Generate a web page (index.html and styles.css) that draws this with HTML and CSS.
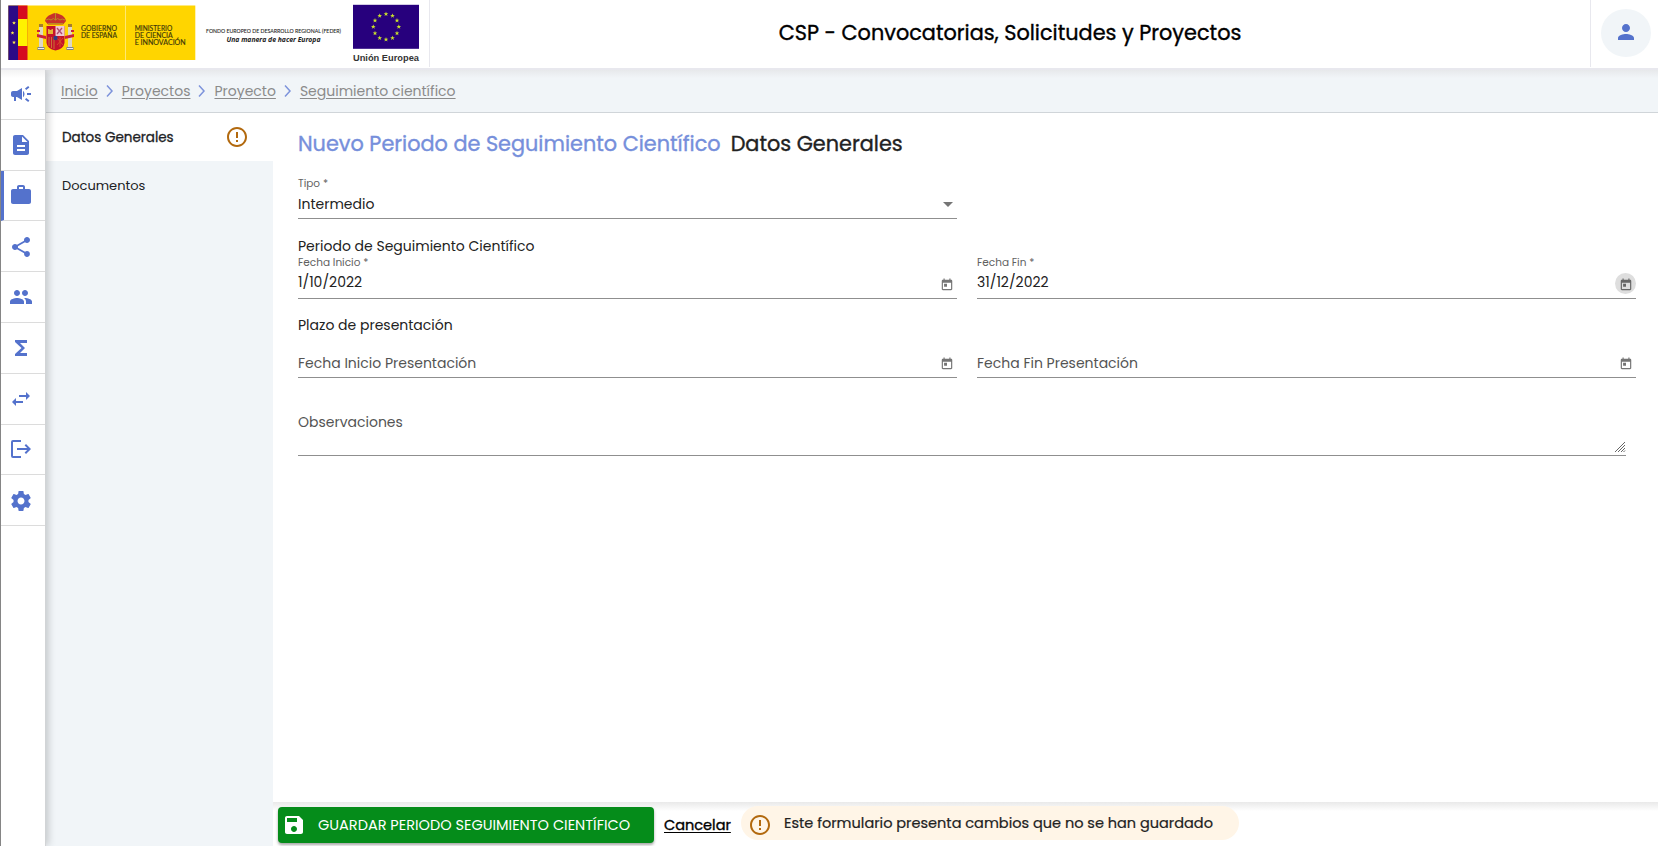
FILE: index.html
```html
<!DOCTYPE html>
<html lang="es">
<head>
<meta charset="utf-8">
<title>CSP - Convocatorias, Solicitudes y Proyectos</title>
<link rel="stylesheet" href="styles.css">
</head>
<body>
<svg width="0" height="0" class="defs">
  <symbol id="star" viewBox="-5 -5 10 10"><path d="M0-5 1.2-1.6 4.8-1.6 1.9.6 3 4 0 1.9-3 4-1.9.6-4.8-1.6-1.2-1.6z"/></symbol>
  <symbol id="error" viewBox="0 0 24 24"><path d="M11 15h2v2h-2zm0-8h2v6h-2zm.99-5C6.47 2 2 6.48 2 12s4.47 10 9.99 10C17.52 22 22 17.52 22 12S17.52 2 11.99 2zM12 20c-4.42 0-8-3.58-8-8s3.58-8 8-8 8 3.58 8 8-3.58 8-8 8z"/></symbol>
  <symbol id="today" viewBox="0 0 24 24"><path d="M19 3h-1V1h-2v2H8V1H6v2H5c-1.11 0-1.99.9-1.99 2L3 19c0 1.1.89 2 2 2h14c1.1 0 2-.9 2-2V5c0-1.1-.9-2-2-2zm0 16H5V8h14v11zM7 10h5v5H7z"/></symbol>
</svg>
<div class="app">
  <header class="header">
    <div class="logos">
      <svg width="429" height="68" viewBox="0 0 429 68">
        <rect x="8.300" y="5.500" width="187" height="54.500" fill="#ffd500"/>
        <rect x="8.300" y="5.500" width="10" height="54.500" fill="#2d0a87"/>
        <rect x="18" y="5.500" width="9.500" height="54.500" fill="#d60b1f"/>
        <rect x="18" y="19" width="9.500" height="27" fill="#fff200"/>
        <g fill="#fff04a"><use href="#star" x="12" y="21" width="4" height="4"/><use href="#star" x="10.500" y="31" width="4" height="4"/><use href="#star" x="12" y="40.500" width="4" height="4"/></g>
        <g>
          <path d="M45 21q1-5 6-6.500 4-3 9 0 5 1.500 6 6.500l-3 3.500H48z" fill="#c8312b"/>
          <path d="M46 20q3-2 5 0 2.500-3 4.500 0 2-3 4.500 0 2-2 5 0M48 23.500h15M55.500 13v7" fill="none" stroke="#b98a24" stroke-width="1"/>
          <path d="M46.500 26h18v17q-1 6-9 7.500-8-1.500-9-7.500z" fill="#c4122a"/>
          <path d="M55.500 26h9v10h-9z" fill="#eec7d3"/>
          <path d="M57 28l5 6m0-6-5 6" stroke="#b0486e" stroke-width="1.300"/>
          <path d="M48 34v-5h1.500v1h2v-1H53v5z" fill="#e5b332"/>
          <path d="M49 37v9M51.500 37v11M54 37v12" stroke="#c98a38" stroke-width=".8"/>
          <path d="M57 38l6 7m0-7-6 7M60 37v10" stroke="#d75a25" stroke-width=".8"/>
          <circle cx="55.500" cy="38" r="2.200" fill="#2e3a84"/>
          <path d="M39 27h4v20h-4zM68 27h4v20h-4z" fill="#ded6c6"/>
          <path d="M39 24h4v3h-4zM68 24h4v3h-4z" fill="#a77c2c"/>
          <path d="M37 34l9 2v3l-9-2zM74 34l-9 2v3l9-2zM37 30h3v2h-3zM71 30h3v2h-3z" fill="#cc2038"/>
          <path d="M37.500 47h7v3h-7zM66.500 47h7v3h-7z" fill="#7b8391"/>
          <path d="M38 48.500h6M67 48.500h6" stroke="#eee" stroke-width="1"/>
        </g>
        <path d="M125.500 5.500V60" stroke="#ffe873"/>
        <g class="gov">
          <text x="81" y="30.500" textLength="36" lengthAdjust="spacingAndGlyphs">GOBIERNO</text>
          <text x="81" y="37.700" textLength="36" lengthAdjust="spacingAndGlyphs">DE ESPAÑA</text>
          <text x="134.700" y="30.500" textLength="37.500" lengthAdjust="spacingAndGlyphs">MINISTERIO</text>
          <text x="134.700" y="37.700" textLength="38" lengthAdjust="spacingAndGlyphs">DE CIENCIA</text>
          <text x="134.700" y="45" textLength="51" lengthAdjust="spacingAndGlyphs">E INNOVACIÓN</text>
        </g>
        <text class="feder" x="206" y="33" textLength="135" lengthAdjust="spacingAndGlyphs">FONDO EUROPEO DE DESARROLLO REGIONAL (FEDER)</text>
        <text class="manera" x="226.500" y="41.500" textLength="94" lengthAdjust="spacingAndGlyphs">Una manera de hacer Europa</text>
        <rect x="353" y="4.800" width="66" height="44" fill="#27007d"/>
        <g fill="#c9e02c">
          <use href="#star" x="383.500" y="11.500" width="5" height="5"/><use href="#star" x="390" y="13.200" width="5" height="5"/><use href="#star" x="394.500" y="18" width="5" height="5"/><use href="#star" x="396.300" y="24.300" width="5" height="5"/><use href="#star" x="394.500" y="30.800" width="5" height="5"/><use href="#star" x="390" y="35.500" width="5" height="5"/><use href="#star" x="383.500" y="37" width="5" height="5"/><use href="#star" x="377.200" y="35.500" width="5" height="5"/><use href="#star" x="372.500" y="30.800" width="5" height="5"/><use href="#star" x="370.800" y="24.300" width="5" height="5"/><use href="#star" x="372.500" y="18" width="5" height="5"/><use href="#star" x="377.200" y="13.200" width="5" height="5"/>
        </g>
        <text class="ue" x="353" y="61.300" textLength="66" lengthAdjust="spacingAndGlyphs">Unión Europea</text>
      </svg>
    </div>
    <h1 class="app-title">CSP - Convocatorias, Solicitudes y Proyectos</h1>
    <div class="user"><span class="avatar"><svg width="24" height="24" viewBox="0 0 24 24"><path d="M12 12c2.210 0 4-1.790 4-4s-1.790-4-4-4-4 1.790-4 4 1.790 4 4 4zm0 2c-2.670 0-8 1.340-8 4v2h16v-2c0-2.660-5.330-4-8-4z"/></svg></span></div>
  </header>
  <div class="shell">
    <nav class="rail">
      <a class="rail-item"><svg viewBox="0 0 24 24"><path d="M18 11v2h4v-2h-4zm-2 6.610c.96.710 2.210 1.650 3.200 2.390.4-.53.8-1.070 1.200-1.600-.99-.74-2.240-1.680-3.200-2.400-.4.540-.8 1.080-1.200 1.610zM20.400 5.600c-.4-.53-.8-1.070-1.200-1.600-.99.740-2.240 1.680-3.200 2.400.4.530.8 1.070 1.200 1.600.96-.72 2.210-1.650 3.200-2.400zM4 9c-1.100 0-2 .9-2 2v2c0 1.100.9 2 2 2h1v4h2v-4h1l5 3V6L8 9H4zm11.500 3c0-1.330-.58-2.530-1.500-3.350v6.690c.92-.81 1.500-2.010 1.500-3.340z"/></svg></a>
      <a class="rail-item"><svg viewBox="0 0 24 24"><path d="M14 2H6c-1.100 0-1.990.9-1.990 2L4 20c0 1.100.89 2 1.990 2H18c1.100 0 2-.9 2-2V8l-6-6zm2 16H8v-2h8v2zm0-4H8v-2h8v2zm-3-5V3.500L18.500 9H13z"/></svg></a>
      <a class="rail-item active"><svg viewBox="0 0 24 24"><path d="M20 6h-4V4c0-1.110-.89-2-2-2h-4c-1.110 0-2 .89-2 2v2H4c-1.110 0-1.990.89-1.990 2L2 19c0 1.110.89 2 2 2h16c1.110 0 2-.89 2-2V8c0-1.110-.89-2-2-2zm-6 0h-4V4h4v2z"/></svg></a>
      <a class="rail-item"><svg viewBox="0 0 24 24"><path d="M18 16.080c-.76 0-1.440.3-1.960.77L8.910 12.700c.05-.23.09-.46.09-.7s-.04-.47-.09-.7l7.050-4.110c.54.5 1.250.81 2.040.81 1.660 0 3-1.340 3-3s-1.340-3-3-3-3 1.340-3 3c0 .24.04.47.09.7L8.040 9.810C7.500 9.310 6.790 9 6 9c-1.660 0-3 1.340-3 3s1.340 3 3 3c.79 0 1.500-.31 2.040-.81l7.120 4.160c-.05.21-.08.43-.08.650 0 1.610 1.310 2.920 2.920 2.920s2.920-1.310 2.920-2.920-1.310-2.920-2.920-2.920z"/></svg></a>
      <a class="rail-item"><svg viewBox="0 0 24 24"><path d="M16 11c1.660 0 2.990-1.340 2.990-3S17.660 5 16 5c-1.660 0-3 1.340-3 3s1.340 3 3 3zm-8 0c1.660 0 2.990-1.340 2.990-3S9.660 5 8 5C6.340 5 5 6.340 5 8s1.340 3 3 3zm0 2c-2.330 0-7 1.170-7 3.500V19h14v-2.500c0-2.330-4.670-3.500-7-3.500zm8 0c-.29 0-.62.020-.97.050 1.160.84 1.970 1.970 1.970 3.450V19h6v-2.500c0-2.330-4.670-3.500-7-3.500z"/></svg></a>
      <a class="rail-item"><svg viewBox="0 0 24 24"><path d="M18 4H6v2l6.500 6L6 18v2h12v-3h-7l5-5-5-5h7z"/></svg></a>
      <a class="rail-item"><svg viewBox="0 0 24 24"><path d="M6.990 11 3 15l3.990 4v-3H14v-2H6.990v-3zM21 9l-3.990-4v3H10v2h7.010v3L21 9z"/></svg></a>
      <a class="rail-item"><svg viewBox="0 0 24 24"><path d="M12 3H4q-2 0-2 2v14q0 2 2 2h8v-2H4V5h8zM17 7l-1.400 1.400 2.600 2.600H8v2h10.200l-2.600 2.600L17 17l5-5z"/></svg></a>
      <a class="rail-item"><svg viewBox="0 0 24 24"><path d="M19.430 12.980c.04-.32.070-.64.070-.98s-.03-.66-.07-.98l2.110-1.650c.19-.15.240-.42.120-.64l-2-3.460c-.12-.22-.39-.3-.61-.22l-2.490 1c-.52-.4-1.080-.73-1.690-.98l-.38-2.650C14.460 2.180 14.250 2 14 2h-4c-.25 0-.46.180-.49.420l-.38 2.650c-.61.250-1.170.590-1.690.98l-2.490-1c-.23-.09-.49 0-.61.220l-2 3.460c-.13.220-.07.490.12.640l2.110 1.650c-.04.320-.07.650-.07.980s.03.660.07.980l-2.110 1.650c-.19.150-.24.420-.12.640l2 3.460c.12.220.39.300.61.220l2.490-1c.52.400 1.080.730 1.690.980l.38 2.650c.03.240.24.420.49.420h4c.25 0 .46-.18.490-.42l.38-2.650c.61-.25 1.170-.59 1.690-.98l2.490 1c.23.090.49 0 .61-.22l2-3.460c.12-.22.070-.49-.12-.64l-2.110-1.650zM12 15.500c-1.930 0-3.500-1.570-3.500-3.500s1.570-3.500 3.500-3.500 3.500 1.570 3.500 3.500-1.570 3.500-3.500 3.500z"/></svg></a>
    </nav>
    <div class="workspace">
      <div class="crumbs">
        <a>Inicio</a><svg width="24" height="14" viewBox="0 0 24 14"><path d="M9 1.500 14 7l-5 5.500"/></svg><a>Proyectos</a><svg width="24" height="14" viewBox="0 0 24 14"><path d="M9 1.500 14 7l-5 5.500"/></svg><a>Proyecto</a><svg width="24" height="14" viewBox="0 0 24 14"><path d="M9 1.500 14 7l-5 5.500"/></svg><a>Seguimiento científico</a>
      </div>
      <div class="body">
        <aside class="tabs">
          <a class="tab selected"><span>Datos Generales</span><svg width="24" height="24"><use href="#error"/></svg></a>
          <a class="tab"><span>Documentos</span></a>
        </aside>
        <main class="main">
          <form class="form">
            <h2 class="heading"><span class="sub">Nuevo Periodo de Seguimiento Científico</span><span>Datos Generales</span></h2>
            <div class="field tipo"><span class="label">Tipo *</span><div class="control"><span>Intermedio</span><i class="arrow"></i></div></div>
            <h3 class="section periodo">Periodo de Seguimiento Científico</h3>
            <div class="pair">
              <div class="field date"><span class="label">Fecha Inicio *</span><div class="control"><span>1/10/2022</span><span class="picker"><svg width="14" height="14"><use href="#today"/></svg></span></div></div>
              <div class="field date"><span class="label">Fecha Fin *</span><div class="control"><span>31/12/2022</span><span class="picker focused"><svg width="14" height="14"><use href="#today"/></svg></span></div></div>
            </div>
            <h3 class="section plazo">Plazo de presentación</h3>
            <div class="pair">
              <div class="field empty"><div class="control"><span class="ph">Fecha Inicio Presentación</span><span class="picker"><svg width="14" height="14"><use href="#today"/></svg></span></div></div>
              <div class="field empty"><div class="control"><span class="ph">Fecha Fin Presentación</span><span class="picker"><svg width="14" height="14"><use href="#today"/></svg></span></div></div>
            </div>
            <div class="field obs"><span class="ph">Observaciones</span><svg class="grip" width="12" height="12" viewBox="0 0 12 12"><path d="M1 11 11 1M4 11l7-7M7 11l4-4M9.500 11l1.500-1.500"/></svg></div>
          </form>
          <footer class="actions">
            <button class="save" type="button"><svg width="24" height="24" viewBox="0 0 24 24"><path d="M17 3H5c-1.110 0-2 .9-2 2v14c0 1.100.89 2 2 2h14c1.100 0 2-.9 2-2V7l-4-4zm-5 16c-1.660 0-3-1.340-3-3s1.340-3 3-3 3 1.340 3 3-1.340 3-3 3zm3-10H5V5h10v4z"/></svg><span>GUARDAR PERIODO SEGUIMIENTO CIENTÍFICO</span></button>
            <a class="cancel">Cancelar</a>
            <div class="notice"><svg width="24" height="24"><use href="#error"/></svg><span>Este formulario presenta cambios que no se han guardado</span></div>
          </footer>
        </main>
      </div>
    </div>
  </div>
</div>
</body>
</html>
```
FILE: styles.css
```css
* { box-sizing: border-box; }
body { margin: 0; font-family: Poppins, Inter, sans-serif; font-size: 14px; color: #222; overflow: hidden; }
h1, h2, h3 { margin: 0; font-weight: 400; }
svg { display: block; flex: none; }
span, a { white-space: nowrap; }
.defs { position: absolute; }
.app { display: flex; flex-direction: column; width: 1658px; height: 846px; border-left: 1px solid #858585; background: #fff; }
.header { display: flex; height: 70px; border-bottom: 2px solid #e8e8ee; flex: none; }
.logos { width: 429px; height: 67px; border-right: 1px solid #e8e8ee; }
.logos svg { margin-left: -1px; }
.gov { font: 6.800px Lato, sans-serif; fill: #40380a; stroke: #40380a; stroke-width: .15px; }
.feder { font: 6px Lato, sans-serif; fill: #222; stroke: #333; stroke-width: .1px; }
.manera { font: italic 700 7.300px "Open Sans", sans-serif; fill: #222; }
.ue { font: 700 9.500px "Liberation Sans", sans-serif; fill: #333; }
.app-title { flex: 1; text-align: center; font-size: 20.800px; line-height: 66px; color: #000; white-space: nowrap; -webkit-text-stroke: .35px; }
.user { width: 68px; height: 67px; border-left: 1px solid #e8e8ee; padding: 9px 0 0 10px; }
.avatar { display: flex; align-items: center; justify-content: center; width: 50px; height: 48px; border-radius: 50%; background: #f1f5f8; }
.avatar svg { fill: #5472cc; margin-top: -2px; }

.shell { display: flex; flex: 1; min-height: 0; }
.rail { width: 45px; border-right: 1px solid #d2d4d6; background: linear-gradient(#f3f3f3, #fff 8px); box-shadow: 2px 0 8px rgba(0, 0, 0, .2); z-index: 1; clip-path: inset(0 -14px 0 0); }
.rail-item { display: flex; align-items: center; height: 50.800px; padding-left: 8px; border-bottom: 1px solid #dcdcdc; }
.rail-item:first-child { height: 49.800px; padding-bottom: 1px; }
.rail-item:nth-child(4), .rail-item:nth-child(9) { padding-top: 1px; }
.rail-item svg { width: 24px; height: 24px; fill: #5472cc; }
.rail-item.active { border-left: 3px solid #5472cc; padding-left: 5px; }
.workspace { display: flex; flex-direction: column; flex: 1; min-width: 0; }
.crumbs { display: flex; align-items: center; height: 43px; padding-left: 15px; border-bottom: 1px solid #d0d5d9; background: linear-gradient(#e7e9eb, #f1f5f8 8px); }
.crumbs a { color: #8b8b8b; text-decoration: underline; text-underline-offset: 2px; text-decoration-thickness: 1px; }
.crumbs svg { fill: none; stroke: #7d93db; stroke-width: 1.500; }
.body { display: flex; flex: 1; min-height: 0; }
.tabs { width: 227px; background: #f1f5f8; }
.tab { display: flex; align-items: center; justify-content: space-between; height: 48px; padding: 0 24px 0 16px; font-size: 13px; color: #202124; }
.tab span { padding-top: 2px; }
.tab.selected { background: #fff; font-size: 13.500px; -webkit-text-stroke: .3px; }
.tab svg { fill: #b2690e; }

.main { display: flex; flex-direction: column; flex: 1; min-width: 0; }
.form { flex: 1; padding: 13px 22px 0 25px; }
.heading { display: flex; gap: 10px; height: 36px; line-height: 36px; font-size: 20.800px; -webkit-text-stroke: .35px; }
.sub { color: #768fdb; }
.field { position: relative; display: flex; flex-direction: column; border-bottom: 1px solid #8f8f8f; }
.label { font-size: 10.500px; line-height: 14px; color: #616161; }
.control { display: flex; justify-content: space-between; line-height: 20px; }
.tipo { width: 659px; height: 57px; padding-top: 15px; }
.tipo .control { padding-top: 3px; }
.arrow { width: 0; height: 0; margin: 8px 4px 0 0; border: 5px solid transparent; border-top-color: #757575; border-bottom: 0; }
.section { font-size: 14px; line-height: 20px; }
.periodo { margin-top: 17px; height: 20px; }
.pair { display: grid; grid-template-columns: 659px 659px; column-gap: 20px; }
.date { height: 43px; }
.date .control { padding-top: 3px; line-height: 18px; }
.picker { display: flex; align-items: center; justify-content: center; width: 21px; height: 21px; border-radius: 50%; }
.picker.focused { background: #dedede; }
.picker svg { fill: #757575; }
.focused svg { fill: #666; }
.date .picker svg { margin-top: 2px; }
.plazo { margin-top: 16px; }
.empty { height: 43px; padding-top: 18px; }
.ph { color: #545454; }
.obs { width: 1328px; height: 78px; padding-top: 34px; line-height: 20px; }
.grip { position: absolute; right: 0; bottom: 2px; fill: none; stroke: #666; stroke-width: 1; }

.actions { display: flex; height: 44px; padding: 5px 0 0 5px; background: linear-gradient(#e9e9e9, #fff 9px); }
.save { display: flex; align-items: center; width: 376px; height: 36px; padding: 0 0 0 4px; border: 0; border-radius: 4px; background: #058c1a; color: #fff; font: 400 14.500px Poppins, Inter, sans-serif; box-shadow: 0 2px 3px rgba(0, 0, 0, .35); }
.save svg { fill: #fff; margin-right: 12px; }
.cancel { margin-left: 10px; width: 67px; line-height: 36px; font-size: 14.500px; color: #000; -webkit-text-stroke: .35px; text-decoration: underline; text-underline-offset: 2px; }
.notice { display: flex; align-items: center; width: 498px; height: 34px; margin: -1px 0 0 10px; padding-left: 7px; border-radius: 17px; background: #fff5e7; line-height: 34px; font-size: 14.500px; -webkit-text-stroke: .2px; }
.notice svg { fill: #b2690e; margin: 3px 12px 0 0; }
```
